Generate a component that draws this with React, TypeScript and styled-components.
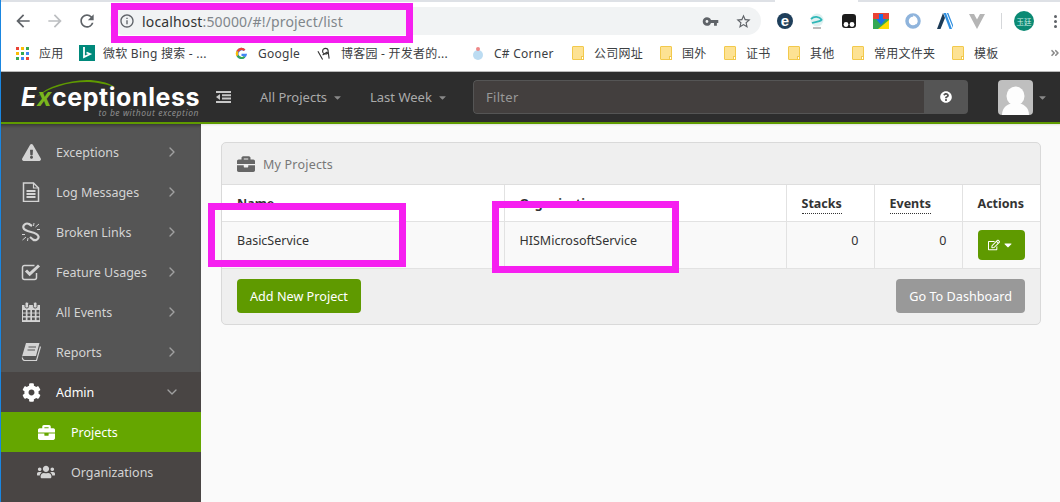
import React from "react";
import styled, { createGlobalStyle } from "styled-components";
import { ChevronDown, ChevronRight } from "lucide-react";
import {
  FaBriefcase,
  FaCaretDown,
  FaCog,
  FaExclamationTriangle,
  FaQuestionCircle,
  FaUsers,
  FaRegEdit,
  FaAngleDoubleRight,
} from "react-icons/fa";
import { MdArrowBack, MdArrowForward, MdRefresh, MdInfoOutline, MdVpnKey, MdStarBorder } from "react-icons/md";

const GlobalStyle = createGlobalStyle`
  html, body { margin: 0; padding: 0; height: 100%; background: #fafafa; overflow: hidden; }
  body { font-family: "Noto Sans", "Noto Sans CJK SC", sans-serif; }
`;

const Page = styled.div`
  position: relative;
  width: 1060px;
  height: 502px;
  overflow: hidden;
  display: flex;
  flex-direction: column;
  border-left: 1px solid #1a86e0;
  box-sizing: border-box;
`;

const TabStrip = styled.div`
  height: 2px;
  background: #dee1e6;
  display: flex;
  justify-content: flex-end;
`;

const TabGap = styled.div`
  width: 83px;
  margin-right: 202px;
  background: #fff;
`;

const Toolbar = styled.div`
  height: 33px;
  background: #fff;
  display: flex;
  align-items: center;
  padding: 5px 0 0 12px;
  box-sizing: border-box;
`;

const NavIcon = styled.span<{ $dim?: boolean }>`
  display: flex;
  width: 32px;
  font-size: 20px;
  color: ${(p) => (p.$dim ? "#bcbec1" : "#5f6368")};
`;

const Omnibox = styled.div`
  margin-left: 1px;
  width: 651px;
  height: 28px;
  border-radius: 14px;
  background: #f1f3f4;
  display: flex;
  align-items: center;
  padding: 0 9px 0 9px;
  box-sizing: border-box;
  font-size: 14px;
  color: #333;
  letter-spacing: 0.15px;
`;

const OmniInfo = styled.span`
  display: flex;
  font-size: 16px;
  color: #5f6368;
  margin-right: 7px;
`;

const UrlRest = styled.span`
  color: #80868b;
`;

const OmniRight = styled.div`
  margin-left: auto;
  display: flex;
  align-items: center;
  gap: 16px;
  color: #5f6368;
  font-size: 17px;
`;

const Extensions = styled.div`
  display: flex;
  align-items: center;
  margin-left: 16px;
`;

const Ext = styled.svg`
  width: 16px;
  height: 16px;
  display: block;
  margin-right: 16px;
`;

const ExtDivider = styled.div`
  width: 1px;
  height: 16px;
  background: #d5d7da;
  margin-right: 12px;
`;

const Avatar = styled.div`
  width: 20px;
  height: 20px;
  border-radius: 50%;
  background: #0b8a74;
  color: #cdeee6;
  font-size: 7.5px;
  display: flex;
  align-items: center;
  justify-content: center;
  margin-right: 20px;
  flex: none;
`;

const Kebab = styled.div`
  display: flex;
  flex-direction: column;
  gap: 2px;
  & > i {
    width: 3px;
    height: 3px;
    border-radius: 50%;
    background: #5f6368;
  }
`;

const Bookmarks = styled.div`
  height: 37px;
  background: #fff;
  display: flex;
  align-items: center;
  font-size: 12px;
  letter-spacing: 0.25px;
  color: #3c4043;
  white-space: nowrap;
  padding-left: 15px;
  border-bottom: 1px solid #b9b9b9;
  box-sizing: border-box;
`;

const Bookmark = styled.div<{ $w: number; $gap?: number }>`
  display: flex;
  align-items: center;
  gap: ${(p) => p.$gap ?? 10}px;
  width: ${(p) => p.$w}px;
  flex: none;
`;

const Folder = styled.span`
  position: relative;
  width: 10px;
  height: 12px;
  background: #fde293;
  border: 1px solid #f2c94c;
  border-radius: 1px;
  &::after {
    content: "";
    position: absolute;
    right: -1px;
    bottom: -1px;
    background: #fff;
    border: 1px solid #f2c94c;
    width: 1px;
    height: 2px;
  }
`;

const MoreMarks = styled.span`
  display: flex;
  color: #8a8a8a;
  font-size: 10px;
`;

const Navbar = styled.div`
  height: 50px;
  background: #2d2d2d;
  border-bottom: 2px solid #5f9a00;
  box-sizing: content-box;
  display: flex;
  align-items: center;
  color: #aaa;
  font-size: 13px;
  position: relative;
  flex: none;
`;

const Logo = styled.div`
  width: 214px;
  padding: 9px 0 0 20px;
  box-sizing: border-box;
  flex: none;
  position: relative;
  color: #fff;
`;

const LogoWord = styled.div`
  font-family: Inter, "Liberation Sans", sans-serif;
  font-size: 25px;
  font-weight: 700;
  letter-spacing: 0.57px;
  line-height: 22px;
  white-space: nowrap;
  position: relative;
  & > i { font-style: italic; }
  & > b { color: #7ab51d; font-weight: 700; font-style: italic; }
`;

const LogoTag = styled.div`
  font-size: 8.5px;
  font-style: italic;
  color: #8d8d8d;
  letter-spacing: 0.55px;
  text-align: right;
  width: 178px;
  line-height: 9px;
  white-space: nowrap;
`;

const LogoSwoosh = styled.svg`
  position: absolute;
  left: 36px;
  top: 3px;
`;

const Collapse = styled.svg`
  width: 15px;
  height: 12px;
  fill: #c8c8c8;
  margin: 0 29px 0 1px;
  flex: none;
`;

const NavDrop = styled.span<{ $w: number }>`
  display: flex;
  align-items: center;
  gap: 5px;
  width: ${(p) => p.$w}px;
  flex: none;
  & > svg { font-size: 11px; color: #888; }
`;

const FilterGroup = styled.div`
  width: 495px;
  height: 34px;
  display: flex;
  border-radius: 4px;
  overflow: hidden;
  flex: none;
`;

const FilterInput = styled.div`
  flex: 1;
  background: #433f3e;
  border: 1px solid #555;
  border-right: none;
  border-radius: 4px 0 0 4px;
  display: flex;
  align-items: center;
  padding-left: 12px;
  color: #999;
  font-size: 13px;
  letter-spacing: 0.3px;
`;

const FilterHelp = styled.div`
  width: 44px;
  background: #555;
  display: flex;
  align-items: center;
  justify-content: center;
  color: #fff;
  font-size: 12px;
`;

const UserPic = styled.div`
  margin-left: 30px;
  width: 35px;
  height: 35px;
  border-radius: 4px;
  background: #bfbfbf;
  overflow: hidden;
  flex: none;
  & > svg { display: block; }
`;

const UserCaret = styled.span`
  display: flex;
  margin-left: 4px;
  font-size: 11px;
  color: #888;
`;

const Body = styled.div`
  flex: 1;
  display: flex;
  min-height: 0;
`;

const Sidebar = styled.nav`
  width: 200px;
  flex: none;
  background: #555;
  box-shadow: inset 0 4px 4px -3px rgba(0, 0, 0, 0.45);
  display: flex;
  flex-direction: column;
  padding-top: 8px;
  box-sizing: border-box;
`;

const NavItem = styled.div<{ $open?: boolean; $active?: boolean; $sub?: boolean }>`
  height: 40px;
  flex: none;
  display: flex;
  align-items: center;
  padding-left: ${(p) => (p.$sub ? "35px" : "20px")};
  box-sizing: border-box;
  font-size: 12.5px;
  color: ${(p) => (p.$active || (p.$open && !p.$sub) ? "#fff" : "#d4d4d4")};
  background: ${(p) => (p.$active ? "#65a600" : p.$open ? "#494544" : "transparent")};
`;

const NavGlyph = styled.span<{ $size?: number }>`
  width: 20px;
  display: flex;
  justify-content: center;
  font-size: ${(p) => p.$size ?? 19}px;
  margin-right: 15px;
`;

const SideIcon = styled.svg`
  width: 20px;
  height: 20px;
  display: block;
`;

const NavArrow = styled.span`
  margin-left: auto;
  margin-right: 21px;
  display: flex;
  color: #a0a0a0;
`;

const SidebarFill = styled.div`
  flex: 1;
  background: #494544;
`;

const Main = styled.main`
  flex: 1;
  background: #fafafa;
  box-shadow: inset 0 3px 3px -3px rgba(0, 0, 0, 0.2);
  padding: 18px 19px 0 20px;
`;

const Panel = styled.section`
  border: 1px solid #d9d9d9;
  border-radius: 5px;
  background: #efefef;
  overflow: hidden;
`;

const PanelHead = styled.div`
  height: 42px;
  display: flex;
  align-items: center;
  padding: 1px 0 0 15px;
  gap: 8px;
  font-size: 12.5px;
  color: #777;
  letter-spacing: 0.2px;
  border-bottom: 1px solid #dedede;
  box-sizing: border-box;
  & > svg { font-size: 18px; color: #666; }
`;

const Table = styled.table`
  width: 100%;
  border-collapse: collapse;
  table-layout: fixed;
  font-size: 12.5px;
  color: #333;
`;

const Th = styled.th<{ $w?: number }>`
  height: 36px;
  box-sizing: border-box;
  padding: 1px 0 0 15px;
  width: ${(p) => (p.$w ? `${p.$w}px` : "auto")};
  background: #fff;
  border-right: 1px solid #e2e2e2;
  border-bottom: 1px solid #e2e2e2;
  text-align: left;
  font-weight: 700;
  &:last-child { border-right: none; }
`;

const Sortable = styled.span`
  border-bottom: 1px dotted #333;
  padding-bottom: 1px;
`;

const Td = styled.td<{ $right?: boolean; $center?: boolean }>`
  height: 47px;
  box-sizing: border-box;
  padding: ${(p) => (p.$center ? "0" : "10px 15px 0")};
  line-height: 18px;
  vertical-align: ${(p) => (p.$center ? "middle" : "top")};
  background: #f9f9f9;
  border-right: 1px solid #e2e2e2;
  border-bottom: 1px solid #e2e2e2;
  text-align: ${(p) => (p.$right ? "right" : p.$center ? "center" : "left")};
  &:last-child { border-right: none; }
`;

const ActionBtn = styled.span`
  display: inline-flex;
  align-items: center;
  justify-content: center;
  gap: 2px;
  width: 47px;
  height: 30px;
  border-radius: 4px;
  background: #5f9a00;
  color: #fff;
  font-size: 12px;
  vertical-align: middle;
`;

const PanelFoot = styled.div`
  height: 55px;
  display: flex;
  align-items: flex-start;
  justify-content: space-between;
  padding: 10px 15px 0;
  box-sizing: border-box;
`;

const Button = styled.span<{ $grey?: boolean }>`
  height: 34px;
  padding: 0 13px;
  display: flex;
  align-items: center;
  border-radius: 4px;
  font-size: 12.65px;
  color: #fff;
  background: ${(p) => (p.$grey ? "#999" : "#5f9a00")};
`;

const Mark = styled.div<{ $x: number; $y: number; $w: number; $h: number }>`
  position: absolute;
  left: ${(p) => p.$x}px;
  top: ${(p) => p.$y}px;
  width: ${(p) => p.$w}px;
  height: ${(p) => p.$h}px;
  border: 7px solid #f61ff0;
  box-sizing: border-box;
  pointer-events: none;
`;

const DocIcon = () => (
  <SideIcon viewBox="0 0 20 20" fill="none" stroke="currentColor">
    <path d="M2.500 1h10l5 5v13.500h-15z" strokeWidth="1.500" />
    <path d="M12.500 1v5h5" strokeWidth="1.200" />
    <path d="M5.500 9h9M5.500 12h9M5.500 15h9" strokeWidth="2" />
  </SideIcon>
);

const BrokenLinkIcon = () => (
  <SideIcon viewBox="0 0 20 20" fill="none" stroke="currentColor">
    <path
      d="M11 4L8 2C5 .5 1.500 3 2.500 6C3 8 6 9 10 10C14 11 17 12 17.500 14.500C18 17.500 14 19 12 17.500L9 15"
      strokeWidth="2.200"
    />
    <path d="M13 1l-.5 3M18 2l-3.500 3M19 7.500h-3M1 12.500h3M1.500 18l3.500-3M6.500 19l.5-3" strokeWidth="1" />
  </SideIcon>
);

const CheckIcon = () => (
  <SideIcon viewBox="0 0 20 20" fill="none" stroke="currentColor">
    <path d="M15.500 11v4.500a2 2 0 0 1-2 2h-10a2 2 0 0 1-2-2v-10a2 2 0 0 1 2-2h10" strokeWidth="1.500" />
    <path d="M5 8.500l3.700 3.700L18 3.500" strokeWidth="3" />
  </SideIcon>
);

const CalendarIcon = () => (
  <SideIcon viewBox="0 0 20 20" fill="currentColor">
    <path d="M1 3h18v17H1z" />
    {[2, 6.500, 11, 15.500].map((x) =>
      [8, 11.500, 15.500].map((y) => <rect key={`${x}-${y}`} x={x} y={y} width="2.800" height="2.600" fill="#555" />)
    )}
    <rect x="4" y="0" width="3.600" height="6" rx="1.500" stroke="#555" />
    <rect x="12.400" y="0" width="3.600" height="6" rx="1.500" stroke="#555" />
  </SideIcon>
);

const BookIcon = () => (
  <SideIcon viewBox="0 0 20 20">
    <path d="M5 1h13.500l-3.500 13H3a2 2 0 0 0-2 .5z" fill="currentColor" />
    <path d="M1.500 15.500a2.500 2.500 0 0 0 2 3h12l4-14" fill="none" stroke="currentColor" strokeWidth="1.200" />
    <path d="M7.500 5h7.500M6.500 8h7.500" stroke="#555" strokeWidth="1.200" />
  </SideIcon>
);

const folders = ["公司网址", "国外", "证书", "其他", "常用文件夹", "模板"];
const folderWidths = [88, 64, 64, 64, 100, 98];

const sideItems = [
  { label: "Exceptions", icon: <FaExclamationTriangle /> },
  { label: "Log Messages", icon: <DocIcon /> },
  { label: "Broken Links", icon: <BrokenLinkIcon /> },
  { label: "Feature Usages", icon: <CheckIcon /> },
  { label: "All Events", icon: <CalendarIcon /> },
  { label: "Reports", icon: <BookIcon /> },
];

export default function App() {
  return (
    <Page>
      <GlobalStyle />
      <TabStrip>
        <TabGap />
      </TabStrip>
      <Toolbar>
        <NavIcon><MdArrowBack /></NavIcon>
        <NavIcon $dim><MdArrowForward /></NavIcon>
        <NavIcon><MdRefresh /></NavIcon>
        <Omnibox>
          <OmniInfo><MdInfoOutline /></OmniInfo>
          localhost<UrlRest>:50000/#!/project/list</UrlRest>
          <OmniRight>
            <MdVpnKey />
            <MdStarBorder />
          </OmniRight>
        </Omnibox>
        <Extensions>
          <Ext viewBox="0 0 16 16">
            <circle cx="8" cy="8" r="8" fill="#1f3f5b" />
            <text x="8" y="12.500" fontSize="15" fontWeight="700" fill="#fff" textAnchor="middle" fontFamily="Liberation Sans">e</text>
          </Ext>
          <Ext viewBox="0 0 16 16">
            <circle cx="8" cy="7" r="6.500" fill="#dff1f1" />
            <path d="M2 6c3-3 8-3 11 1M3 10c3-1 7-1 10-3" stroke="#2fb8b8" strokeWidth="1.800" fill="none" />
            <path d="M4 15h8" stroke="#bbb" strokeWidth="2" />
          </Ext>
          <Ext viewBox="0 0 16 16">
            <rect x="1" y="1" width="14" height="14" rx="3" fill="#1c1c1c" />
            <circle cx="5" cy="11.500" r="2.400" fill="#fff" />
            <circle cx="11" cy="11.500" r="2.400" fill="#fff" />
          </Ext>
          <Ext viewBox="0 0 16 16">
            <rect width="16" height="16" fill="#34a853" />
            <path d="M0 0h16v6H0z" fill="#ea4335" />
            <path d="M5 16l11-9v9z" fill="#fbdc05" />
            <path d="M6 1h4v5h3l-5 6-5-6h3z" fill="#1a73e8" />
          </Ext>
          <Ext viewBox="0 0 16 16">
            <circle cx="8" cy="8" r="6" fill="none" stroke="#8fb4dc" strokeWidth="3.500" />
            <path d="M8 3a5 5 0 0 1 3 8" stroke="#fff" strokeWidth="1.200" fill="none" />
          </Ext>
          <Ext viewBox="0 0 16 16">
            <path d="M6 0L0 16h3.500L8 5z" fill="#1c3b57" />
            <path d="M6.500 0h2.500l6 16h-2.500zM9.800 0h1.500l4.700 12v3z" fill="#2f8fe0" />
          </Ext>
          <Ext viewBox="0 0 16 16">
            <path d="M0 1h16L8 16z" fill="#b5b5b5" />
            <path d="M5 1h6L8 6.500z" fill="#fff" />
          </Ext>
          <ExtDivider />
          <Avatar>玉廷</Avatar>
          <Kebab><i /><i /><i /></Kebab>
        </Extensions>
      </Toolbar>
      <Bookmarks>
        <Bookmark $w={63}>
          <svg width="13" height="13" viewBox="0 0 13 13">
            {[0, 5, 10].map((x, i) =>
              [0, 5, 10].map((y, j) => (
                <rect key={`${i}${j}`} x={x} y={y} width="3" height="3" fill={["#ea4335", "#fbbc05", "#34a853", "#4285f4"][(i + j) % 4]} />
              ))
            )}
          </svg>
          应用
        </Bookmark>
        <Bookmark $w={156} $gap={8}>
          <svg width="16" height="16" viewBox="0 0 16 16">
            <rect width="16" height="16" fill="#00897b" />
            <path d="M5 2v10l6-3-3.500-1.500" stroke="#fff" strokeWidth="1.800" fill="none" />
          </svg>
          微软 Bing 搜索 - ...
        </Bookmark>
        <Bookmark $w={82}>
          <svg width="13" height="13" viewBox="0 0 14 14">
            <path d="M13 7.200H7v2.400h3.400A3.600 3.600 0 1 1 9.500 4.300l1.700-1.700A6 6 0 1 0 13 7.200z" fill="#4285f4" />
            <path d="M1.700 4l2 1.500a3.600 3.600 0 0 1 5.800-1.200l1.700-1.700A6 6 0 0 0 1.700 4z" fill="#ea4335" />
            <path d="M1.700 10l2-1.500a3.600 3.600 0 0 0 5.800 1.200l1.500 1.500A6 6 0 0 1 1.700 10z" fill="#34a853" />
            <path d="M1.700 4a6 6 0 0 0 0 6l2-1.500a3.600 3.600 0 0 1 0-3z" fill="#fbbc05" />
          </svg>
          Google
        </Bookmark>
        <Bookmark $w={154}>
          <svg width="14" height="15" viewBox="0 0 15 15">
            <circle cx="9" cy="5" r="3" fill="none" stroke="#333" strokeWidth="1.200" />
            <path d="M1 5l5 9M12 6l1 7M6 9l5-3" stroke="#333" strokeWidth="1.200" fill="none" />
          </svg>
          博客园 - 开发者的...
        </Bookmark>
        <Bookmark $w={101} $gap={9}>
          <svg width="14" height="16" viewBox="0 0 14 16">
            <circle cx="7" cy="10" r="5" fill="#bcdcf2" />
            <circle cx="7" cy="4" r="2" fill="#e88" />
          </svg>
          C# Corner
        </Bookmark>
        {folders.map((name, i) => (
          <Bookmark key={name} $w={folderWidths[i]}>
            <Folder />
            {name}
          </Bookmark>
        ))}
        <MoreMarks><FaAngleDoubleRight /></MoreMarks>
      </Bookmarks>
      <Navbar>
        <Logo>
          <LogoSwoosh width="78" height="18" viewBox="0 0 78 18">
            <path d="M0 17C10 6 30 1 50 0C60 0 70 2 78 7C65 3 55 2 50 2C30 2 12 8 0 17z" fill="#5f9a00" />
          </LogoSwoosh>
          <LogoWord><i>E</i><b>x</b>ceptionless</LogoWord>
          <LogoTag>to be without exception</LogoTag>
        </Logo>
        <Collapse viewBox="0 0 15 12">
          <path d="M0 0h15v2H0zM6 3.300h9v2H6zM6 6.600h9v2H6zM0 10h15v2H0zM0 6l4-3v6z" />
        </Collapse>
        <NavDrop $w={110}>All Projects <FaCaretDown /></NavDrop>
        <NavDrop $w={103}>Last Week <FaCaretDown /></NavDrop>
        <FilterGroup>
          <FilterInput>Filter</FilterInput>
          <FilterHelp><FaQuestionCircle /></FilterHelp>
        </FilterGroup>
        <UserPic>
          <svg width="35" height="35" viewBox="0 0 35 35">
            <ellipse cx="17.500" cy="16" rx="9" ry="9.500" fill="#fdfdfd" />
            <path d="M4 35c0-8 6-12 13.500-12S31 27 31 35z" fill="#fdfdfd" />
          </svg>
        </UserPic>
        <UserCaret><FaCaretDown /></UserCaret>
      </Navbar>
      <Body>
        <Sidebar>
          {sideItems.map((s) => (
            <NavItem key={s.label}>
              <NavGlyph>{s.icon}</NavGlyph>
              {s.label}
              <NavArrow><ChevronRight size={16} strokeWidth={2} /></NavArrow>
            </NavItem>
          ))}
          <NavItem $open>
            <NavGlyph><FaCog /></NavGlyph>
            Admin
            <NavArrow><ChevronDown size={16} strokeWidth={2} /></NavArrow>
          </NavItem>
          <NavItem $open $sub $active>
            <NavGlyph $size={17}><FaBriefcase /></NavGlyph>
            Projects
          </NavItem>
          <NavItem $open $sub>
            <NavGlyph $size={18}><FaUsers /></NavGlyph>
            Organizations
          </NavItem>
          <SidebarFill />
        </Sidebar>
        <Main>
          <Panel>
            <PanelHead><FaBriefcase />My Projects</PanelHead>
            <Table>
              <thead>
                <tr>
                  <Th $w={282}>Name</Th>
                  <Th $w={282}>Organization</Th>
                  <Th $w={88}><Sortable>Stacks</Sortable></Th>
                  <Th $w={88}><Sortable>Events</Sortable></Th>
                  <Th>Actions</Th>
                </tr>
              </thead>
              <tbody>
                <tr>
                  <Td>BasicService</Td>
                  <Td>HISMicrosoftService</Td>
                  <Td $right>0</Td>
                  <Td $right>0</Td>
                  <Td $center><ActionBtn><FaRegEdit /><FaCaretDown /></ActionBtn></Td>
                </tr>
              </tbody>
            </Table>
            <PanelFoot>
              <Button>Add New Project</Button>
              <Button $grey>Go To Dashboard</Button>
            </PanelFoot>
          </Panel>
        </Main>
      </Body>
      <Mark $x={110} $y={3} $w={302} $h={40} />
      <Mark $x={207} $y={203} $w={198} $h={64} />
      <Mark $x={491} $y={201} $w={187} $h={72} />
    </Page>
  );
}
